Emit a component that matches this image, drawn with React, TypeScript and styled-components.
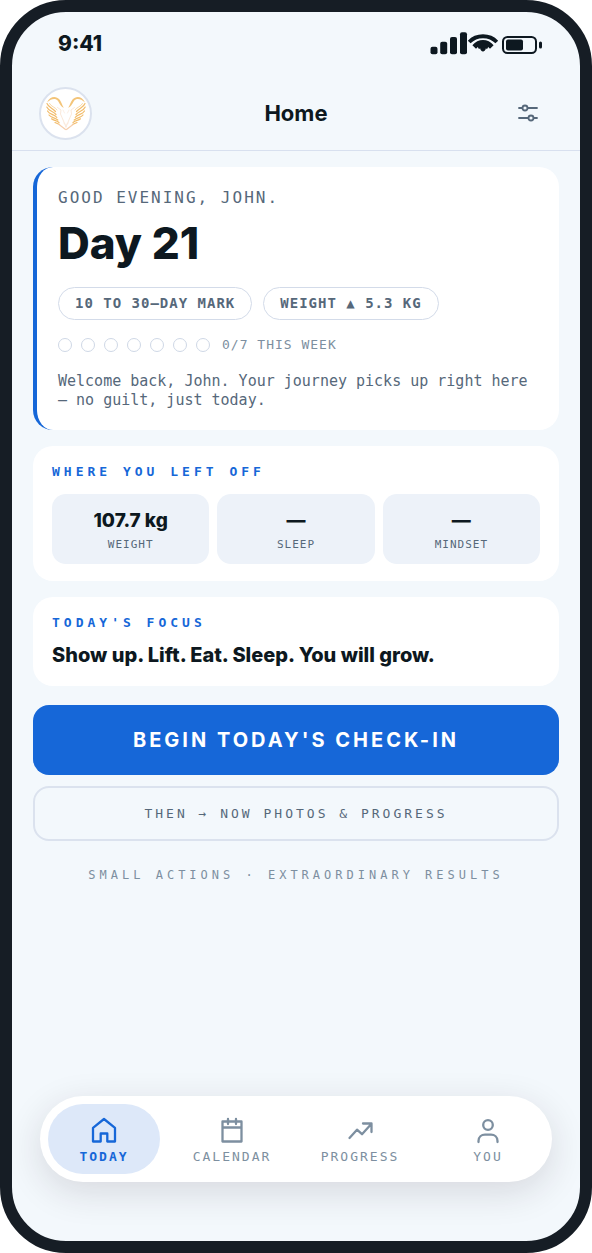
import React from "react";
import styled, { createGlobalStyle, css } from "styled-components";

const ink = "#0d1820";
const slate = "#56687a";
const mist = "#7d8fa0";
const blue = "#1667d8";
const hairline = "#dbe2ee";
const sans = `Inter, "Liberation Sans", sans-serif`;
const mono = `"DejaVu Sans Mono", monospace`;

const GlobalStyle = createGlobalStyle`
  *, *::before, *::after { box-sizing: border-box; }
  body { margin: 0; background: #fff; color: ${ink}; font-family: ${sans}; }
  h1, h2, p, ul { margin: 0; padding: 0; }
  button { font: inherit; cursor: pointer; }
`;

const Phone = styled.div`
  display: flex;
  flex-direction: column;
  min-height: 100vh;
  border: 12px solid #161d25;
  border-radius: 66px;
  background: #f3f8fc;
  overflow: hidden;
`;

const StatusBar = styled.div`
  display: flex;
  align-items: center;
  justify-content: space-between;
  height: 64px;
  padding: 0 38px 0 46px;
`;

const Clock = styled.span`
  font-size: 21px;
  line-height: 28px;
  font-weight: 800;
`;

const TopBar = styled.header`
  display: grid;
  grid-template-columns: 1fr auto 1fr;
  align-items: center;
  height: 75px;
  padding: 0 27px;
  border-bottom: 1px solid #d8e0ef;
`;

const Title = styled.h1`
  font-size: 22px;
  line-height: 28px;
  font-weight: 700;
`;

const Avatar = styled.button`
  display: grid;
  place-items: center;
  width: 53px;
  height: 53px;
  padding: 0;
  border: 2px solid ${hairline};
  border-radius: 50%;
  background: #fff;
`;

const IconButton = styled.button`
  justify-self: end;
  display: grid;
  place-items: center;
  width: 50px;
  height: 44px;
  padding: 0;
  border: 0;
  background: none;
  color: ${slate};
`;

const Content = styled.main`
  display: flex;
  flex-direction: column;
  gap: 16px;
  padding: 16px 21px;
`;

const Card = styled.section`
  padding: 16px 19px 17px;
  border-radius: 20px;
  background: #fff;
`;

const HeroCard = styled(Card)`
  padding: 20px 21px;
  border-left: 4px solid ${blue};
`;

const Greeting = styled.p`
  font: 400 16px/22px ${mono};
  letter-spacing: 2px;
  text-transform: uppercase;
  color: ${slate};
`;

const DayCount = styled.h2`
  margin-top: 6px;
  font-size: 44px;
  line-height: 56px;
  font-weight: 800;
`;

const Pills = styled.ul`
  display: flex;
  flex-wrap: wrap;
  gap: 11px;
  margin-top: 16px;
  list-style: none;
`;

const Pill = styled.li`
  padding: 7px 16px;
  border: 1px solid #d3dbe9;
  border-radius: 17px;
  font: 700 14px/17px ${mono};
  letter-spacing: 1px;
  text-transform: uppercase;
  color: ${slate};
`;

const Week = styled.div`
  display: flex;
  align-items: center;
  gap: 9px;
  margin-top: 16px;
`;

const Dot = styled.span`
  width: 14px;
  height: 14px;
  border: 1px solid #cfd8e6;
  border-radius: 50%;
`;

const WeekCount = styled.span`
  margin-left: 3px;
  font: 400 13px/18px ${mono};
  letter-spacing: 1px;
  text-transform: uppercase;
  color: ${mist};
`;

const Message = styled.p`
  margin-top: 18px;
  font: 400 15px/19px ${mono};
  color: ${slate};
`;

const Eyebrow = styled.h2`
  font: 700 13px/20px ${mono};
  letter-spacing: 4px;
  text-transform: uppercase;
  color: ${blue};
`;

const Tiles = styled.div`
  display: grid;
  grid-template-columns: repeat(3, 1fr);
  gap: 8px;
  margin-top: 12px;
`;

const Tile = styled.div`
  display: flex;
  flex-direction: column;
  align-items: center;
  gap: 4px;
  padding: 14px 8px 11px;
  border-radius: 14px;
  background: #edf2f9;
`;

const TileValue = styled.span`
  font-size: 19px;
  line-height: 25px;
  font-weight: 800;
`;

const TileLabel = styled.span`
  font: 400 11px/16px ${mono};
  letter-spacing: 1px;
  text-transform: uppercase;
  color: ${slate};
`;

const Focus = styled.p`
  margin-top: 8px;
  font-size: 20px;
  line-height: 28px;
  font-weight: 800;
`;

const Actions = styled.div`
  display: flex;
  flex-direction: column;
  gap: 11px;
  margin-top: 3px;
`;

const PrimaryButton = styled.button`
  && {
    padding: 21px 16px;
    border: 0;
    border-radius: 16px;
    background: ${blue};
    color: #fff;
    font: 700 20px/28px ${sans};
    letter-spacing: 3px;
    text-transform: uppercase;
  }
`;

const SecondaryButton = styled.button`
  && {
    padding: 16px;
    border: 2px solid ${hairline};
    border-radius: 16px;
    background: transparent;
    color: ${slate};
    font: 400 13px/19px ${mono};
    letter-spacing: 3px;
    text-transform: uppercase;
  }
`;

const Tagline = styled.p`
  margin-top: 9px;
  text-align: center;
  font: 400 12px/19px ${mono};
  letter-spacing: 4px;
  text-transform: uppercase;
  color: ${mist};
`;

const TabBar = styled.nav`
  display: flex;
  gap: 16px;
  margin: auto 28px 59px;
  padding: 8px;
  border-radius: 43px;
  background: #fff;
  box-shadow: 0 10px 36px rgba(40, 30, 40, 0.14);
`;

const Tab = styled.a<{ $active?: boolean }>`
  flex: 1;
  display: flex;
  flex-direction: column;
  align-items: center;
  gap: 4px;
  padding: 12px 0 8px;
  border-radius: 35px;
  font: 400 13px/18px ${mono};
  letter-spacing: 2px;
  text-transform: uppercase;
  text-decoration: none;
  color: ${mist};
  ${(p) =>
    p.$active &&
    css`
      background: #dde8f9;
      color: ${blue};
      font-weight: 700;
    `}
`;

const StatusIcons = () => (
  <svg width="112" height="24" viewBox="0 0 112 24" fill={ink} role="img" aria-label="Signal, Wi-Fi and battery">
    <g transform="translate(0 -2)">
      <rect x="0.5" y="16.7" width="7" height="7.6" rx="2" />
      <rect x="10.2" y="11.8" width="7" height="12.5" rx="2" />
      <rect x="20" y="7" width="7" height="17.3" rx="2" />
      <rect x="30" y="2.2" width="7" height="22.1" rx="2" />
    </g>
    <g transform="translate(0 -1)">
      <path d="M39.2 11C46.5 3.3 59.5 3.3 66.8 11" fill="none" stroke={ink} strokeWidth="3.8" />
      <path d="M42.4 14.2C48 7.2 58 7.2 63.6 14.2L60 17.8 58.2 16 57 18.2 55.9 17.3C55.5 21.4 50.5 21.4 50.1 17.3L49 18.2 47.8 16 46 17.8Z" />
      <rect x="73" y="6" width="33" height="16" rx="4.5" fill="none" stroke={ink} strokeWidth="2" />
      <rect x="76" y="8.6" width="17" height="10.8" rx="2" />
      <rect x="109" y="10.5" width="3" height="7" rx="1.5" />
    </g>
  </svg>
);

const RamWing = () => (
  <g>
    <path d="M1 7.5C4 1 10 .5 13.5 4.5C15.5 7 16 10 17.8 12.8C14.5 11.5 13.8 8.5 12 6C9.5 3 5.500 3.5 1 7.5Z" fill="#f3c479" stroke="none" />
    <path d="M1 8.5C2.5 12.5 6.5 13 9.5 16.5" />
    <path d="M.8 12C2.5 16 7 16 10 19.5" />
    <path d="M1.5 16C3.5 19.5 7.5 19 10.8 22.3" />
    <path d="M3 20C5 23 8.5 22 11.8 25" />
    <path d="M5.5 23.8C8 25.8 10 25 13 27.5" />
    <path d="M9 27.5L13.5 29.5" />
    <path d="M3.5 8.5C5.5 12 9 12 11 14.8" strokeWidth=".6" />
    <path d="M11.5 12.5L15 15 14.5 19 17.5 26 20 32" stroke="#f9e2cf" strokeWidth=".8" />
    <path d="M13 29.5L19.5 34.5" stroke="#f6cfae" />
    <path d="M17 15L18.5 18M17.5 28L20 29.5" stroke="#fbebdd" strokeWidth=".8" />
  </g>
);

const RamLogo = () => (
  <svg width="40" height="36" viewBox="0 0 40 36" fill="none" stroke="#f2bd6c" strokeWidth="1.2" strokeLinecap="round" strokeLinejoin="round" aria-hidden="true">
    <RamWing />
    <g transform="translate(40 0) scale(-1 1)">
      <RamWing />
    </g>
  </svg>
);

const SlidersIcon = () => (
  <svg width="24" height="24" viewBox="0 0 24 24" fill="none" stroke="currentColor" strokeWidth="1.8" strokeLinecap="round" aria-hidden="true">
    <path d="M3 7h3.3M11.7 7H21M3 17h9.3M17.7 17H21" />
    <circle cx="9" cy="7" r="2.5" />
    <circle cx="15" cy="17" r="2.5" />
  </svg>
);

const tabIcons = {
  today: <path d="M3 11.8 14 3l11 8.8V25.5H17.3V17.5H10.7V25.5H3Z" />,
  calendar: <path d="M4.5 5.5h19v20h-19ZM4.5 11.5h19M10 3v5M18 3v5" />,
  progress: <path d="M3.5 22 11 13.700 16 18.2 25.500 7.800M17 7.500H25.500V16" />,
  you: (
    <>
      <circle cx="14" cy="9" r="4.8" />
      <path d="M4.5 26V25C4.5 21 7.5 18.7 11 18.7h6c3.5 0 6.500 2.3 6.500 6.3v1" />
    </>
  ),
};

const tabs: { key: keyof typeof tabIcons; label: string }[] = [
  { key: "today", label: "Today" },
  { key: "calendar", label: "Calendar" },
  { key: "progress", label: "Progress" },
  { key: "you", label: "You" },
];

const stats = [
  { label: "Weight", value: "107.7 kg" },
  { label: "Sleep", value: "—" },
  { label: "Mindset", value: "—" },
];

export default function App() {
  return (
    <>
      <GlobalStyle />
      <Phone>
        <StatusBar>
          <Clock>9:41</Clock>
          <StatusIcons />
        </StatusBar>
        <TopBar>
          <Avatar aria-label="Profile">
            <RamLogo />
          </Avatar>
          <Title>Home</Title>
          <IconButton aria-label="Settings">
            <SlidersIcon />
          </IconButton>
        </TopBar>
        <Content>
          <HeroCard>
            <Greeting>Good evening, John.</Greeting>
            <DayCount>Day 21</DayCount>
            <Pills>
              <Pill>10 to 30–day mark</Pill>
              <Pill>Weight ▲ 5.3 kg</Pill>
            </Pills>
            <Week>
              {Array.from({ length: 7 }, (_, i) => (
                <Dot key={i} />
              ))}
              <WeekCount>0/7 this week</WeekCount>
            </Week>
            <Message>Welcome back, John. Your journey picks up right here — no guilt, just today.</Message>
          </HeroCard>
          <Card>
            <Eyebrow>Where you left off</Eyebrow>
            <Tiles>
              {stats.map((s) => (
                <Tile key={s.label}>
                  <TileValue>{s.value}</TileValue>
                  <TileLabel>{s.label}</TileLabel>
                </Tile>
              ))}
            </Tiles>
          </Card>
          <Card>
            <Eyebrow>Today's focus</Eyebrow>
            <Focus>Show up. Lift. Eat. Sleep. You will grow.</Focus>
          </Card>
          <Actions>
            <PrimaryButton>Begin today's check-in</PrimaryButton>
            <SecondaryButton>Then → now photos &amp; progress</SecondaryButton>
          </Actions>
          <Tagline>Small actions · Extraordinary results</Tagline>
        </Content>
        <TabBar aria-label="Main">
          {tabs.map((t, i) => (
            <Tab key={t.key} href={`#${t.key}`} $active={i === 0} aria-current={i === 0 ? "page" : undefined}>
              <svg width="28" height="28" viewBox="0 0 28 28" fill="none" stroke="currentColor" strokeWidth="2.3" strokeLinecap="round" strokeLinejoin="round" aria-hidden="true">
                {tabIcons[t.key]}
              </svg>
              {t.label}
            </Tab>
          ))}
        </TabBar>
      </Phone>
    </>
  );
}
